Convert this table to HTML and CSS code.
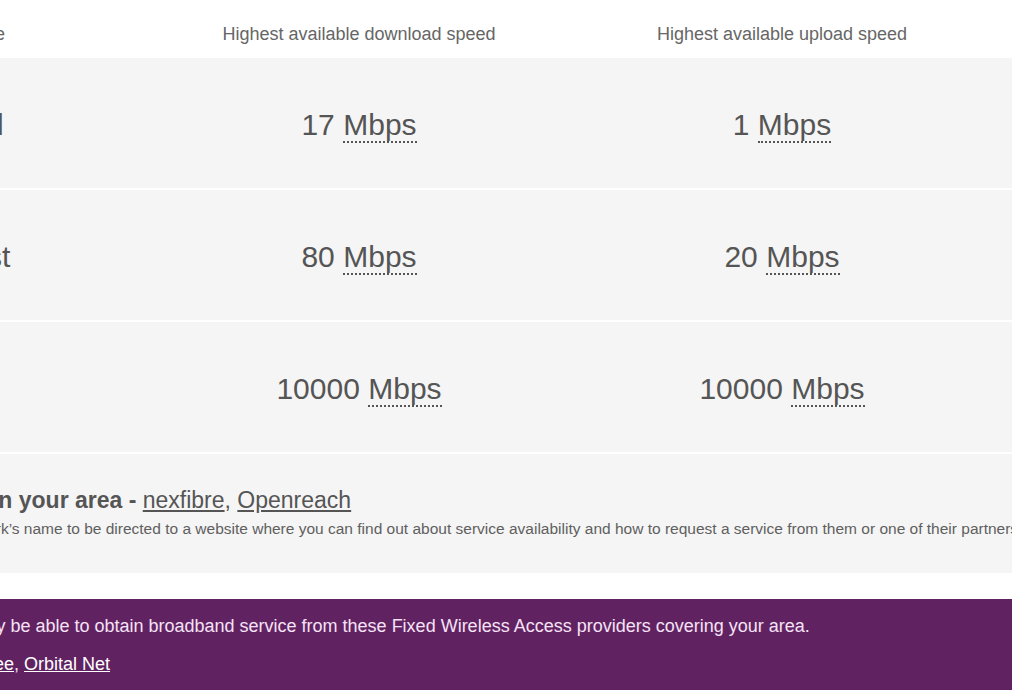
FILE: index.html
```html
<!DOCTYPE html>
<html lang="en">
<head>
<meta charset="utf-8">
<title>Broadband availability</title>
<link rel="stylesheet" href="styles.css">
</head>
<body>
<div class="page">
  <div class="speeds">
    <div class="row head">
      <div class="cell label">Broadband type</div>
      <div class="cell">Highest available download speed</div>
      <div class="cell">Highest available upload speed</div>
      <div class="cell"></div>
    </div>
    <div class="row">
      <div class="cell label">Standard</div>
      <div class="cell">17 <span class="unit" title="Megabits per second">Mbps</span></div>
      <div class="cell">1 <span class="unit" title="Megabits per second">Mbps</span></div>
      <div class="cell"></div>
    </div>
    <div class="row">
      <div class="cell label">Superfast</div>
      <div class="cell">80 <span class="unit" title="Megabits per second">Mbps</span></div>
      <div class="cell">20 <span class="unit" title="Megabits per second">Mbps</span></div>
      <div class="cell"></div>
    </div>
    <div class="row">
      <div class="cell label">Ultrafast</div>
      <div class="cell">10000 <span class="unit" title="Megabits per second">Mbps</span></div>
      <div class="cell">10000 <span class="unit" title="Megabits per second">Mbps</span></div>
      <div class="cell"></div>
    </div>
  </div>

  <div class="networks">
    <h3 class="networks-title">Networks in your area - <span class="network-links"><a href="#">nexfibre</a>, <a href="#">Openreach</a></span></h3>
    <p class="networks-note">Click on a network’s name to be directed to a website where you can find out about service availability and how to request a service from them or one of their partners.</p>
  </div>

  <div class="wireless">
    <p class="wireless-text">You may be able to obtain broadband service from these Fixed Wireless Access providers covering your area.</p>
    <p class="wireless-links"><a href="#">WiFi Free</a>, <a href="#">Orbital Net</a></p>
  </div>
</div>
</body>
</html>
```

FILE: styles.css
```css
html, body {
  margin: 0;
  padding: 0;
  background: #ffffff;
  overflow: hidden;
}

body {
  font-family: "Liberation Sans", Arial, sans-serif;
  color: #555555;
}

.page {
  margin-left: -130px;
  width: 1160px;
}

.speeds {
  display: flex;
  flex-direction: column;
  gap: 2px;
  background: #ffffff;
}

.row {
  display: grid;
  grid-template-columns: 277.5px 423px 423px 1fr;
  height: 130px;
  background: #f5f5f5;
  font-size: 30px;
  color: #555555;
}

.row.head {
  height: 58px;
  background: #ffffff;
  font-size: 18px;
  color: #666666;
  margin-bottom: -2px;
}

.cell {
  display: flex;
  align-items: center;
  justify-content: center;
  white-space: nowrap;
  gap: 0.28em;
  padding-top: 4px;
}

.row.head .cell {
  padding-top: 10px;
}

.cell.label {
  justify-content: flex-start;
  padding-left: 12px;
}

.row.head .cell.label {
  padding-left: 8px;
}

.unit {
  border-bottom: 2px dotted #555555;
  line-height: 1.1;
}

.networks {
  margin-top: 2px;
  background: #f5f5f5;
  height: 119px;
  padding: 33px 0 0 12px;
  box-sizing: border-box;
}

.networks-title {
  margin: 0;
  font-size: 23px;
  line-height: 26px;
  font-weight: bold;
  color: #555555;
  white-space: nowrap;
}

.network-links {
  font-weight: normal;
}

.network-links a {
  color: #555555;
  text-decoration: underline;
}

.networks-note {
  margin: 7px 0 0;
  font-size: 15.5px;
  line-height: 18px;
  color: #5f5f5f;
  white-space: nowrap;
}

.wireless {
  margin-top: 26px;
  background: #612262;
  height: 91px;
  padding: 16px 0 0 66px;
  box-sizing: border-box;
  color: #f6e2f6;
}

.wireless-text {
  margin: 0;
  font-size: 18px;
  line-height: 22px;
  white-space: nowrap;
}

.wireless-links {
  margin: 16px 0 0;
  font-size: 18px;
  line-height: 22px;
  white-space: nowrap;
}

.wireless-links a {
  color: #ffffff;
  text-decoration: underline;
}
```
